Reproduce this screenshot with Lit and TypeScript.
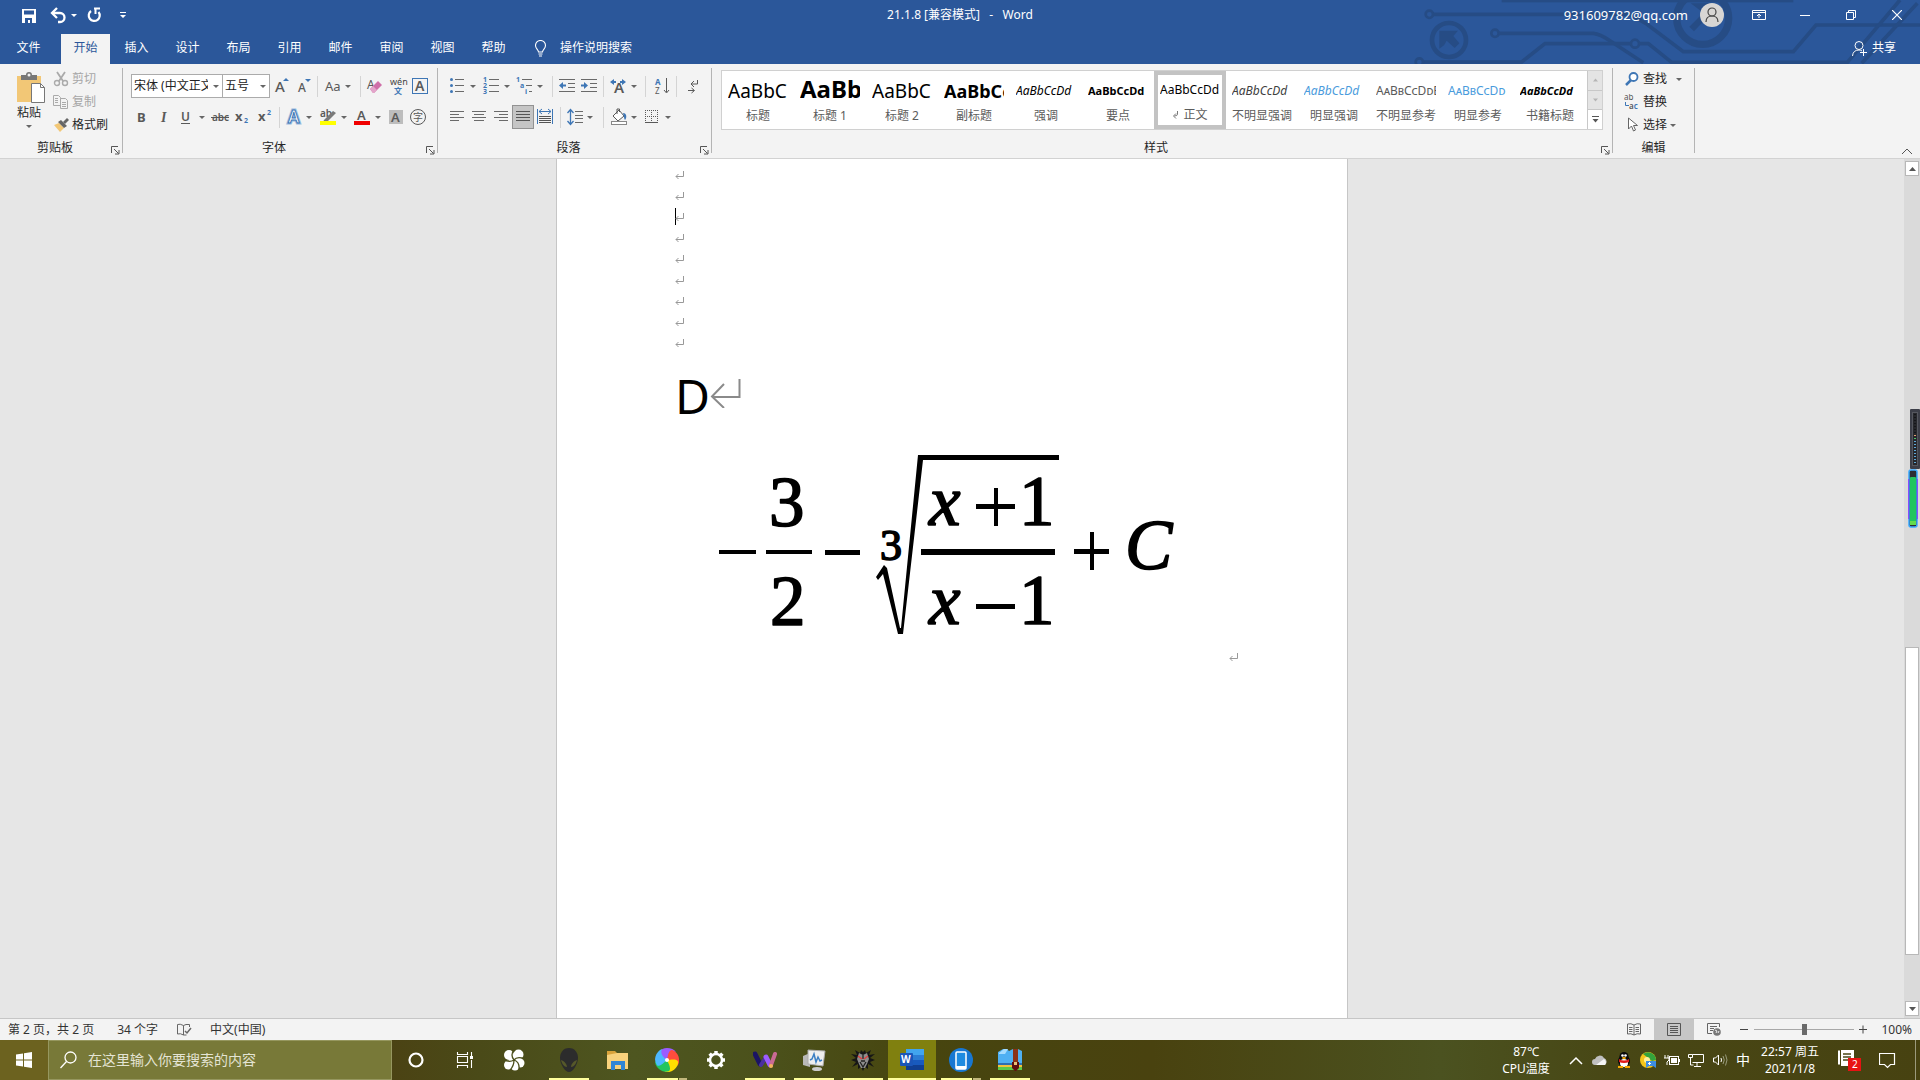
import { LitElement, html, svg, css, TemplateResult, SVGTemplateResult } from "lit";
import { customElement, state } from "lit/decorators.js";
import { classMap } from "lit/directives/class-map.js";

type Art = SVGTemplateResult | SVGTemplateResult[];

const icon = (w: number, h: number, art: Art, cls = "") =>
  html`<svg class=${cls} width=${w} height=${h} viewBox="0 0 ${w} ${h}" aria-hidden="true">${art}</svg>`;

/* Small drop-down triangle centred on x */
const caret = (x: number, y = 12) => svg`<path d="M${x - 3} ${y}h6l-3 3z" fill="#666"/>`;
const lines = (rows: number[][], color = "#6a6a6a") =>
  rows.map(([x, y, w]) => svg`<rect x=${x} y=${y} width=${w} height="1" fill=${color}/>`);

const G = "#595959";
const B = "#3e76b5";

interface Tool {
  label: string;
  w: number;
  art?: Art;
  on?: boolean;
}

const sep: Tool = { label: "", w: 6 };

const fontTop: Tool[] = [
  { label: "增大字号", w: 23, art: svg`<text x="6" y="18" font-size="15" font-weight="500" fill=${G}>A</text><path d="M14 7h6l-3-3z" fill=${B}/>` },
  { label: "减小字号", w: 23, art: svg`<text x="6" y="18" font-size="12" font-weight="500" fill=${G}>A</text><path d="M13 5h6l-3 3z" fill=${B}/>` },
  sep,
  { label: "更改大小写", w: 37, art: svg`<text x="4" y="17" font-size="13" fill=${G}>Aa</text>${caret(27, 11)}` },
  sep,
  { label: "清除所有格式", w: 23, art: svg`<text x="3" y="15" font-size="12" fill=${G}>A</text><path d="M6 15l8-8 4 4-8 8h-1z" fill="#cf6fa8"/><path d="M6 15l3-3 4 4-3 3h-1z" fill="#e3a5ca"/>` },
  { label: "拼音指南", w: 23, art: svg`<text x="3" y="11" font-size="9" fill="#444">wén</text><text x="7" y="20" font-size="8" font-weight="700" fill=${B}>文</text>` },
  { label: "字符边框", w: 23, art: svg`<rect x="2.500" y="4.500" width="15" height="15" fill="none" stroke=${B}/><text x="5" y="17" font-size="14" font-weight="600" fill=${G}>A</text>` },
];

const fontBottom: Tool[] = [
  { label: "加粗", w: 22, art: svg`<text x="6" y="17" font-size="13" font-weight="700" fill=${G}>B</text>` },
  { label: "倾斜", w: 22, art: svg`<text x="8" y="17" font-size="14" font-style="italic" font-weight="700" font-family="Liberation Serif" fill=${G}>I</text>` },
  { label: "下划线", w: 34, art: svg`<text x="6" y="16" font-size="12" font-weight="600" fill=${G}>U</text><rect x="6" y="18" width="9" height="1" fill=${G}/>${caret(27, 11)}` },
  { label: "删除线", w: 24, art: svg`<text x="3" y="16" font-size="10" font-weight="600" fill=${G}>abc</text><rect x="2" y="12" width="18" height="1" fill=${G}/>` },
  { label: "下标", w: 22, art: svg`<text x="2" y="16" font-size="13" font-weight="700" fill=${G}>x</text><text x="11" y="18" font-size="7" font-weight="700" fill=${B}>2</text>` },
  { label: "上标", w: 22, art: svg`<text x="3" y="16" font-size="13" font-weight="700" fill=${G}>x</text><text x="12" y="10" font-size="7" font-weight="700" fill=${B}>2</text>` },
  sep,
  { label: "文本效果", w: 32, art: svg`<text x="5" y="18" font-size="17" font-weight="600" fill="#fff" stroke="#9cbce0" stroke-width="3">A</text><text x="5" y="18" font-size="17" font-weight="600" fill="#fff" stroke=${B}>A</text>${caret(26, 11)}` },
  { label: "突出显示", w: 34, art: svg`<text x="5" y="12" font-size="10" font-weight="600" fill=${G}>ab</text><path d="M9 15l9-9 3 2-8 8-5 1z" fill="#7a7a7a"/><rect x="5" y="16" width="16" height="4" fill="#ff0"/>${caret(29, 11)}` },
  { label: "字体颜色", w: 35, art: svg`<text x="8" y="15" font-size="13" font-weight="600" fill=${G}>A</text><rect x="5" y="16" width="16" height="4" fill="#f00000"/>${caret(29, 11)}` },
  { label: "字符底纹", w: 22, art: svg`<rect x="5" y="5" width="14" height="14" fill="#bdbdbd"/><text x="7" y="17" font-size="13" font-weight="600" fill=${G}>A</text>` },
  { label: "带圈字符", w: 22, art: svg`<circle cx="12" cy="12" r="7.500" fill="none" stroke=${G}/><text x="7" y="16" font-size="10" fill=${G}>字</text>` },
];

const paraTop: Tool[] = [
  { label: "项目符号", w: 34, art: svg`${[6, 12, 18].map((y) => svg`<circle cx="4.500" cy=${y - 0.5} r="1.500" fill=${B}/>`)}${lines([[8, 5, 9], [8, 11, 9], [8, 17, 9]])}${caret(26, 11)}` },
  { label: "编号", w: 34, art: svg`${[1, 2, 3].map((n) => svg`<text x="2" y=${2 + n * 6} font-size="7" font-weight="700" fill=${B}>${n}</text>`)}${lines([[8, 5, 10], [8, 11, 10], [8, 17, 10]])}${caret(26, 11)}` },
  { label: "多级列表", w: 35, art: svg`<text x="1" y="8" font-size="7" font-weight="700" fill=${B}>1</text><text x="5" y="14" font-size="7" font-weight="700" fill=${B}>a</text><text x="10" y="20" font-size="7" font-weight="700" fill=${B}>i</text>${lines([[7, 5, 10], [11, 11, 6], [14, 17, 3]])}${caret(25, 11)}` },
  sep,
  { label: "减少缩进量", w: 22, art: svg`${lines([[3, 5, 16], [12, 9, 7], [12, 13, 7], [3, 17, 16]])}<path d="M3 11.500l4-3.500v2.500h3v2h-3v2.500z" fill=${B}/>` },
  { label: "增加缩进量", w: 23, art: svg`${lines([[3, 5, 16], [12, 9, 7], [12, 13, 7], [3, 17, 16]])}<path d="M10 11.500l-4-3.500v2.500h-3v2h3v2.500z" fill=${B}/>` },
  sep,
  { label: "中文版式", w: 36, art: svg`<text x="7" y="19" font-size="15" font-weight="600" fill=${G}>A</text><path d="M3 8l4-3v2h2v2h-2v2zM19 8l-4-3v2h-2v2h2v2z" fill=${B}/>${caret(27, 11)}` },
  sep,
  { label: "排序", w: 25, art: svg`<text x="6" y="11" font-size="8" font-weight="700" fill=${B}>A</text><text x="6" y="20" font-size="8" fill=${G}>Z</text><path d="M17.500 4v14M15 16l2.500 3 2.500-3" fill="none" stroke=${G}/>` },
  sep,
  { label: "显示编辑标记", w: 28, art: svg`<path d="M17.500 6v4h-6M14 7l-3 3 3 3M8 16.500h6M11.500 14l3 2.500-3 2.500" fill="none" stroke=${G}/>` },
];

const paraBottom: Tool[] = [
  { label: "左对齐", w: 22, art: svg`${lines([[3, 6, 14], [3, 9, 9], [3, 12, 14], [3, 15, 9]])}` },
  { label: "居中", w: 22, art: svg`${lines([[3, 6, 14], [5, 9, 10], [3, 12, 14], [5, 15, 10]])}` },
  { label: "右对齐", w: 21, art: svg`${lines([[3, 6, 14], [8, 9, 9], [3, 12, 14], [8, 15, 9]])}` },
  { label: "两端对齐", w: 22, on: true, art: svg`${lines([[4, 6, 14], [4, 9, 14], [4, 12, 14], [4, 15, 14]], "#555")}` },
  { label: "分散对齐", w: 24, art: svg`<path d="M3.500 4v15M18.500 4v15" stroke=${B}/><path d="M5 6.500h12M8 4l-3 2.500 3 2.500M14 4l3 2.500-3 2.500" fill="none" stroke=${B}/>${lines([[5, 11, 12], [5, 13, 12], [5, 15, 12], [5, 17, 12]], "#555")}` },
  sep,
  { label: "行和段落间距", w: 37, art: svg`<path d="M6.500 5v14M3.500 8l3-3.500 3 3.500M3.500 16l3 3.500 3-3.500" fill="none" stroke=${B} stroke-width="1.300"/>${lines([[11, 6, 8], [11, 10, 8], [11, 13, 8], [11, 17, 8]])}${caret(26, 11)}` },
  sep,
  { label: "底纹", w: 36, art: svg`<path d="M6 11l6-6 5 6-6 5z" fill="#fff" stroke=${G}/><path d="M10 9V4h2.500v3" fill="none" stroke=${G}/><path d="M16 8c4 0 4 5 2 7-1-1-1-4-2-7z" fill=${B}/><rect x="4.500" y="16.500" width="15" height="3" fill="#fff" stroke="#888"/>${caret(27, 11)}` },
  { label: "边框", w: 34, art: svg`<path d="M2 5.500h13M2 11.500h13M2.500 5v12M8.500 5v12M14.500 5v12" stroke=${G} stroke-dasharray="1 1"/><rect x="2" y="17" width="13" height="1" fill=${G}/>${caret(25, 11)}` },
];

const styleItems = [
  ["AaBbC", "标题", "p-title"],
  ["AaBb", "标题 1", "p-head"],
  ["AaBbC", "标题 2", "p-title"],
  ["AaBbCc", "副标题", "p-sub"],
  ["AaBbCcDd", "强调", "p-em"],
  ["AaBbCcDd", "要点", "p-strong"],
  ["AaBbCcDd", "正文", ""],
  ["AaBbCcDd", "不明显强调", "p-em p-gray"],
  ["AaBbCcDd", "明显强调", "p-em p-blue"],
  ["AaBbCcDdEe", "不明显参考", "p-caps p-mute"],
  ["AaBbCcDd", "明显参考", "p-caps p-blue"],
  ["AaBbCcDd", "书籍标题", "p-em p-strong"],
];

const launcher = icon(10, 10, svg`<path d="M1.500 8V1.500H8M4 4l4.500 4.500M9 5v4H5" fill="none" stroke="#555"/>`);
const returnMark = icon(9, 9, svg`<path d="M8.500 1v5.500H1M3.500 4L1 6.500 3.500 9" fill="none" stroke="#999"/>`, "mark");

const circuit = svg`
  <g transform="scale(.33333)" fill="none" stroke="#264c85" stroke-width="11">
    <rect x="305" y="0" width="875" height="7" fill="#264c85" stroke="none"/>
    <circle cx="88" cy="43" r="11" stroke-width="8"/>
    <path d="M100 43H690L740 72L850 155H1180L1248 75H1560"/>
    <circle cx="147" cy="120" r="51" stroke-width="14"/>
    <path d="M118 92h56l-14 16 18 22-14 14-24-22-8 14-14 10z" fill="#264c85" stroke="none"/>
    <circle cx="285" cy="100" r="11" stroke-width="8"/>
    <path d="M297 100H580Q600 102 630 122L730 188"/>
    <circle cx="705" cy="131" r="12" stroke-width="8"/>
    <path d="M693 131H435L365 186H70M717 131H745L815 187H1342L1500 0M1385 190L1552 10"/>
    <circle cx="58" cy="186" r="11" stroke-width="8"/>
    <circle cx="908" cy="55" r="78" stroke-width="22"/>
    <path d="M872 10h68v60l-18-18-40 42-14-14 42-42z" fill="#264c85" stroke="none"/>
  </g>`;

const formula = svg`
  <g font-family="Liberation Serif" font-size="71" fill="#000" stroke-linejoin="round">
    <path d="M44 118h37v4H44zM91 118h46v4H91zM150 118h35v5h-35zM246 117h134v6H246z"/>
    <path d="M201 145l8-12 3 3 13 60h1L243 23h141v5H248L228 202h-5L208 142l-5 6z"/>
    <path d="M301 72h39v5h-39zM319 56h4v38h-4zM301 172h39v5h-39zM399 117h35v5h-35zM415 100h4v38h-4z"/>
    <g stroke="#000" stroke-width="1.600">
      <text x="94" y="94">3</text>
      <text x="95" y="193">2</text>
      <text x="205" y="128" font-size="44">3</text>
      <text x="254" y="93" font-style="italic">x</text>
      <text x="254" y="192" font-style="italic">x</text>
      <text x="344" y="93">1</text>
      <text x="344" y="192">1</text>
      <text x="450" y="137" font-style="italic">C</text>
    </g>
  </g>`;

interface App {
  name: string;
  art: Art;
  run?: "full" | "multi";
  active?: boolean;
}

const apps: App[] = [
  { name: "Alienware", run: "full", art: svg`<path d="M12 0c6 0 9 5 9 10 0 6-5 14-9 14S3 16 3 10c0-5 3-10 9-10z" fill="#2c2c2c"/><path d="M4 12c3 1 6 4 6 7-3 0-5-3-6-7zM20 12c-3 1-6 4-6 7 3 0 5-3 6-7z" fill="#56582a"/>` },
  { name: "文件资源管理器", art: svg`<path d="M1 3h8l2 2h11v16H1z" fill="#d9a33a"/><path d="M1 7l10-2h11v16H1z" fill="#f8d27c"/><path d="M5 13h14v9h-4v-4H9v4H5z" fill="#2f86d6"/><rect x="9" y="17" width="6" height="4" fill="#f8d27c"/>` },
  { name: "浏览器", run: "multi", art: svg`${["#9b5cff", "#ff4d3d", "#ffdf00", "#22c55e", "#4db8ff"].map((c, i) => svg`<path d="M12 12C9 10 3 8 4 4Q7 0 12 0q6 0 9 4c-4-1-7 2-9 8z" fill=${c} transform="rotate(${i * 72} 12 12)"/>`)}<circle cx="12" cy="12" r="2" fill="#fff"/>` },
  { name: "设置", art: svg`<circle cx="12" cy="12" r="6" fill="none" stroke="#fff" stroke-width="2.500"/>${[0, 45, 90, 135].map((a) => svg`<path d="M12 3v3M12 18v3" stroke="#fff" stroke-width="3.500" transform="rotate(${a} 12 12)"/>`)}` },
  { name: "万兴", run: "full", art: svg`<path d="M2 6l5 10" stroke="#1b1464" stroke-width="5" stroke-linecap="round"/><path d="M8 17l5-8" stroke="#4a2fa0" stroke-width="4" stroke-linecap="round"/><path d="M13 9l4 8" stroke="#9c5cff" stroke-width="5" stroke-linecap="round"/><path d="M18 17l4-11" stroke="#c96a94" stroke-width="4" stroke-linecap="round"/><circle cx="18" cy="18" r="2" fill="#f2b35c"/>` },
  { name: "性能监视器", run: "full", art: svg`<path d="M1 8l7-3v14l-7-2z" fill="#b9b9b9"/><path d="M6 2l17 1-2 15-15-2z" fill="#eee" stroke="#aaa"/><path d="M8 12l2-1 2-5 2 8 2-5 2 4 2-1" fill="none" stroke="#3b7fc4" stroke-width="1.500"/><ellipse cx="15" cy="21" rx="5" ry="2" fill="#ccc"/>` },
  { name: "巫师", run: "full", art: svg`<path d="M12 4l2-2 1 3 5-3-2 5 6-1-5 4 5 2-5 2 4 5-6-3 0 5-3-2-2 4-2-4-3 2 0-5-6 3 4-5-5-2 5-2-5-4 6 1-2-5 5 3 1-3z" fill="#161616"/><path d="M8 5l4 2 4-2 2 6-2 5-2 4h-4l-2-4-2-5z" fill="#8d8d8d"/><path d="M12 7v4M9 14l3 5 3-5M10 13h4" stroke="#222" stroke-width="1.300" fill="none"/><path d="M7 8l4 3M17 8l-4 3" stroke="#e04040" stroke-width="1.500"/>` },
  { name: "Word", run: "full", active: true, art: svg`<rect x="6" y="1" width="18" height="6" fill="#41a5ee"/><rect x="6" y="7" width="18" height="5" fill="#2b7cd3"/><rect x="6" y="12" width="18" height="5" fill="#185abd"/><rect x="6" y="17" width="18" height="5" fill="#103f91"/><rect x="0" y="5" width="13" height="13" rx="1" fill="#1a56b8"/><text x="1" y="15" font-size="10" font-weight="700" fill="#fff">W</text>` },
  { name: "手机助手", run: "multi", art: svg`<circle cx="12" cy="12" r="12" fill="#1877d2"/><rect x="7" y="4" width="10" height="17" rx="1" fill="#1f8be0" stroke="#fff" stroke-width="1.500"/><rect x="7" y="18" width="10" height="3" fill="#fff"/>` },
  { name: "压缩软件", run: "full", art: svg`<path d="M0 4l5-3h4l2 2 4-2h5l4 2v12H0z" fill="#4fb0f3"/><path d="M1 5l5-4h4l-3 5H1z" fill="#a5dcff"/><rect x="0" y="15" width="24" height="2" fill="#2f6fb0"/><rect x="0" y="17" width="24" height="2" fill="#f2c33c"/><rect x="0" y="19" width="24" height="3" fill="#5cc84a"/><rect x="15" y="1" width="5" height="20" fill="#8b3218"/><path d="M14 14h7v6l-3 3h-1l-3-3z" fill="#5e0d10"/><rect x="16" y="14" width="3" height="3" fill="#e8c078"/>` },
];

const tray: [string, Art][] = [
  ["显示隐藏的图标", svg`<path d="M2 12l6-6 6 6" fill="none" stroke="#fff" stroke-width="1.500"/>`],
  ["OneDrive", svg`<path d="M3 13a3 3 0 0 1 0-6 5 5 0 0 1 9-1 4 4 0 0 1 1 7z" fill="#bfbfbf"/><path d="M4 13l8-6a4 4 0 0 1 1 6z" fill="#f5f5f5"/>`],
  ["QQ", svg`<ellipse cx="8" cy="9" rx="6" ry="6" fill="#0a0a0a"/><ellipse cx="8" cy="4.500" rx="4.500" ry="4.500" fill="#0a0a0a"/><ellipse cx="8" cy="11" rx="4" ry="4" fill="#fff"/><path d="M3 7q5 3 10 0v3q-5 2-10 0z" fill="#e01b1b"/><circle cx="6.500" cy="3.500" r="1.300" fill="#fff"/><circle cx="9.500" cy="3.500" r="1.300" fill="#fff"/><ellipse cx="8" cy="6" rx="2" ry="1" fill="#f8a800"/><path d="M2 14h5v2H2zM9 14h5v2H9z" fill="#f8a800"/>`],
  ["游戏加速", svg`<circle cx="8" cy="8" r="8" fill="#f5c518"/><path d="M3 2a8 8 0 0 1 13 6l-4 1-5-4z" fill="#34a33c"/><circle cx="7" cy="8" r="3" fill="#fff09a"/><path d="M6 9h10v7l-3-2H9l-3 2z" fill="#3d8de0"/><path d="M8 11.500h3M9.500 10v3" stroke="#fff"/>`],
  ["电源", svg`<path d="M1 3v3M4 3v3M0 6h5v2l-2 2v3" fill="none" stroke="#fff"/><rect x="5.500" y="4.500" width="9" height="8" fill="none" stroke="#fff"/><rect x="7" y="6" width="6" height="5" fill="#fff"/><rect x="15" y="7" width="1" height="3" fill="#fff"/>`],
  ["网络", svg`<path d="M4.500 2.500h11v8h-11M9 11v3M6 14.500h7" fill="none" stroke="#fff"/><path d="M.5 2.500h4v3h-4zM2.500 6v7h3" fill="none" stroke="#fff"/>`],
  ["音量", svg`<path d="M1.500 6h2l3-3v10l-3-3h-2z" fill="none" stroke="#fff"/><path d="M9 6q1 2 0 4" fill="none" stroke="#fff"/><path d="M11 4q2.500 4 0 8M13.500 2.500q3 5.500 0 11" fill="none" stroke="#999b7c"/>`],
];

@customElement("app-root")
export class AppRoot extends LitElement {
  @state() private tab = "开始";
  @state() private current = "正文";

  static styles = css`
    :host {
      display: flex;
      flex-direction: column;
      min-height: 100vh;
      position: relative;
      overflow: hidden;
      font: 12px/16px "Noto Sans", "Noto Sans CJK SC", sans-serif;
      color: #262626;
      background: #e6e6e6;
    }
    * { box-sizing: border-box; }
    svg { display: block; flex: none; }
    button { font: inherit; color: inherit; background: none; border: 0; padding: 0; margin: 0; }

    .head { position: relative; background: #2b579a; color: #fff; }
    .circuit { position: absolute; top: 0; right: 0; }
    .titlebar { position: relative; display: grid; grid-template-columns: 1fr auto 1fr; height: 34px; padding-bottom: 4px; align-items: center; }
    .quick { display: flex; align-items: center; padding-left: 21px; }
    .account { display: flex; align-items: center; justify-content: flex-end; height: 30px; }
    .mail { font-size: 13px; padding-right: 12px; }
    .win { display: grid; place-items: center; width: 46px; height: 30px; }
    .avatar { padding-right: 12px; }
    .doc-name { white-space: pre; }
    .tabs { position: relative; display: flex; height: 30px; padding-left: 5px; }
    .tab { width: 51px; padding-bottom: 3px; }
    .tab.file { width: 47px; margin-right: 9px; }
    .tab.on { background: #f3f3f3; color: #2b579a; width: 49px; margin-right: 1px; }
    .tell { display: flex; align-items: center; gap: 13px; margin-left: 16px; padding-bottom: 2px; }
    .share { display: flex; align-items: center; gap: 5px; margin-left: auto; padding: 0 24px 2px 0; }

    .ribbon { display: flex; height: 95px; background: #f3f3f3; border-bottom: 1px solid #d2d2d2; }
    .rule { width: 1px; background: #b4b4b4; margin: 4px 0 5px; }
    .group { display: flex; flex-direction: column; justify-content: space-between; padding-top: 10px; }
    .caption { display: flex; align-items: center; height: 20px; }
    .caption span { flex: 1; text-align: center; }
    .caption button { width: 12px; padding-top: 4px; }
    .rows { display: flex; flex-direction: column; gap: 7px; }
    .row { display: flex; height: 24px; }
    .tool.on { background: #c5c5c5; outline: 1px solid #929292; outline-offset: -1px; }
    .bar { width: 1px; height: 21px; margin: 2px 3px 2px 2px; background: #d4d4d4; }
    .clip { width: 122px; }
    .clip-body { display: flex; padding-left: 13px; }
    .paste { display: flex; flex-direction: column; align-items: center; width: 32px; margin-right: 8px; margin-top: -3px; }
    .stack { display: flex; flex-direction: column; gap: 7px; margin-top: -3px; }
    .mini { display: flex; align-items: center; gap: 3px; height: 16px; }
    .mini:disabled { color: #a6a6a6; }
    .font { width: 314px; }
    .font .rows { padding-left: 8px; }
    .combo { position: relative; height: 24px; margin-right: -1px; }
    .combo svg { position: absolute; right: 3px; top: 0; pointer-events: none; }
    .combo select { appearance: none; font: inherit; color: #222; height: 24px; width: 48px; padding: 0 14px 0 2px; margin: 0; background: #fff; border: 1px solid #ababab; border-radius: 0; overflow: hidden; text-overflow: clip; }
    .combo.wide select { width: 92px; }
    .para { width: 273px; }
    .para .rows { padding-left: 9px; }
    .styles { flex: 0 1 900px; min-width: 0; padding-top: 6px; }
    .gallery { display: flex; height: 60px; margin: 0 9px; border: 1px solid #d0d0d0; background: #fff; }
    .cards { display: flex; flex: 1; min-width: 0; overflow: hidden; }
    .card { flex: none; width: 72px; height: 58px; padding: 0 6px 1px; border: 0 solid #c3c3c3; color: #5c5c5c; }
    .card.on { border-width: 4px; padding: 0 2px 1px; }
    .card.on .preview { margin-top: -4px; }
    .preview { display: block; height: 32px; line-height: 38px; overflow: hidden; white-space: nowrap; text-align: left; color: #000; }
    .name { display: flex; justify-content: center; align-items: center; gap: 4px; height: 24px; margin: 0 -6px; white-space: nowrap; }
    .p-title { font-size: 19px; }
    .p-head { font-size: 24px; font-weight: 700; line-height: 34px; }
    .p-sub { font-size: 18px; font-weight: 700; }
    .p-em { font-style: italic; }
    .p-strong { font-size: 11px; font-weight: 700; }
    .p-gray { color: #404040; }
    .p-mute { color: #5a5a5a; }
    .p-blue { color: #4a9bdc; }
    .p-caps { font-variant: small-caps; }
    .scroller { display: flex; flex-direction: column; width: 15px; border-left: 1px solid #c8c8c8; }
    .scroller button { flex: 1; display: grid; place-items: center; background: #e4e4e4; border-bottom: 1px solid #c8c8c8; }
    .scroller button:last-child { background: #fff; border: 0; }
    .edit { width: 81px; }
    .edit .stack { padding-left: 11px; }
    .collapse { margin: auto 7px 0 auto; height: 12px; }

    .work { flex: 1; display: flex; min-height: 400px; }
    .canvas { flex: 1; display: flex; justify-content: center; }
    .page { width: 792px; background: #fff; border: solid #c6c6c6; border-width: 0 1px; padding: 5px 110px 0 118px; }
    .para-line { display: flex; align-items: center; height: 21px; margin: 0; }
    .ibeam { width: 1px; height: 17px; background: #000; margin-right: -1px; }
    .answer { font-size: 48px; line-height: 72px; margin: 7px 0 0; color: #000; display: flex; align-items: baseline; }
    .answer svg { align-self: flex-start; margin-top: 18px; }
    .figure { display: flex; align-items: flex-end; margin: 0; }
    .vscroll { display: flex; flex-direction: column; width: 16px; background: #dadada; padding: 2px 1px; }
    .vscroll button { display: grid; place-items: center; height: 15px; background: #fff; border: 1px solid #b8b8b8; }
    .thumb { height: 308px; background: #fff; border: 1px solid #b8b8b8; margin: auto 0 46px; }
    .gadget { position: absolute; right: 0; top: 409px; }

    .status { display: flex; align-items: center; height: 22px; background: #f3f3f3; border-top: 1px solid #c6c6c6; padding-left: 8px; color: #333; }
    .status span { margin-right: 18px; white-space: nowrap; }
    .status .pages { margin-right: 23px; }
    .status .lang { margin-left: 18px; }
    .views { display: flex; margin-left: auto; }
    .view { display: grid; place-items: center; width: 40px; height: 21px; }
    .view.on { background: #c6c6c6; }
    .zoom { display: flex; align-items: center; gap: 5px; margin-left: 6px; }
    .zoom button { display: grid; place-items: center; width: 9px; height: 20px; }
    .zoom input { appearance: none; width: 100px; height: 20px; margin: 0; background: linear-gradient(#a8a8a8, #a8a8a8) center / 100% 1px no-repeat; }
    .zoom input::-webkit-slider-thumb { appearance: none; width: 5px; height: 11px; background: #6a6a6a; border-radius: 0; }
    .status .pct { margin: 0 8px 0 13px; }

    .taskbar { display: flex; height: 40px; color: #fff; background: linear-gradient(90deg, #4b4213 20%, #4a4a18 25%, #4e5620 33%, #4b511b 40%, #47450f 48%, #49420f 60%, #4b5220 75%, #484715 84%, #474211); }
    .start { display: grid; place-items: center; width: 48px; background: #6c621f; }
    .search { display: flex; align-items: center; gap: 11px; width: 344px; padding-left: 11px; background: #787938; border: 1px solid #96975f; }
    .search input { flex: 1; min-width: 0; background: none; border: 0; outline: 0; padding: 0; font: inherit; font-size: 14px; color: #fff; }
    .search input::placeholder { color: #e4e4d4; opacity: 1; }
    .pins { display: flex; gap: 1px; }
    .apps { display: flex; gap: 1px; margin-left: 7px; }
    .app { display: flex; flex-direction: column; align-items: center; justify-content: space-between; width: 48px; padding-top: 8px; }
    .pins .app { padding-top: 0; justify-content: center; }
    .app.active { background: #80800f; }
    .run { display: flex; gap: 1px; width: 40px; height: 2px; }
    .active .run { width: 48px; }
    .run i { flex: 1; background: #ffff9c; }
    .run i + i { flex: 0 0 8px; background: #c2b87c; }
    .stretch { flex: 1; }
    .two { text-align: center; line-height: 17px; padding-top: 3px; }
    .temp { width: 62px; }
    .tray { display: flex; align-items: center; gap: 8px; margin-left: 11px; }
    .ime { font-size: 14px; width: 14px; }
    .clock { width: 80px; }
    .news, .notes { display: grid; place-items: center; }
    .news { width: 24px; margin-left: 8px; }
    .notes { width: 28px; margin: 0 14px 0 11px; }
    .peek { width: 5px; border-left: 1px solid #9b9a7c; }
  `;

  private tool(t: Tool): TemplateResult {
    return t.art
      ? html`<button class=${classMap({ tool: true, on: !!t.on })} aria-label=${t.label}>${icon(t.w, 24, t.art)}</button>`
      : html`<i class="bar"></i>`;
  }

  private caption(text: string, launch = true) {
    return html`<div class="caption"><span>${text}</span>${launch ? html`<button aria-label="${text}设置">${launcher}</button>` : ""}</div>`;
  }

  private renderHead() {
    const tabs = ["文件", "开始", "插入", "设计", "布局", "引用", "邮件", "审阅", "视图", "帮助"];
    return html`<header class="head">
      ${icon(520, 64, circuit, "circuit")}
      <div class="titlebar">
        <div class="quick">
          <button aria-label="保存">${icon(28, 18, svg`<path d="M1 3h14v14H1z" fill="#fff"/><path d="M3 4.500h10v4H3zM4 12h7v5H9v-3H7v3H4z" fill="#2b579a"/>`)}</button>
          <button aria-label="撤消">${icon(38, 18, svg`<path d="M4 7h7a4.500 4.500 0 0 1 0 9H9" fill="none" stroke="#fff" stroke-width="2.300"/><path d="M8 2L3 7l5 5" fill="none" stroke="#fff" stroke-width="2.300"/><path d="M22 8h6l-3 3z" fill="#fff"/>`)}</button>
          <button aria-label="恢复">${icon(28, 18, svg`<path d="M4 5a5.500 5.500 0 1 0 7.500 1" fill="none" stroke="#fff" stroke-width="2.200"/><path d="M7 2.500h6M8.500 2v6" fill="none" stroke="#fff" stroke-width="2"/>`)}</button>
          <button aria-label="自定义快速访问工具栏">${icon(16, 18, svg`<path d="M5 6h6v1H5zM5 9h6l-3 3z" fill="#fff"/>`)}</button>
        </div>
        <div class="doc-name">21.1.8 [兼容模式]   -   Word</div>
        <div class="account">
          <span class="mail">931609782@qq.com</span>
          <span class="avatar">${icon(24, 24, svg`<circle cx="12" cy="12" r="12" fill="#d8d6d4"/><circle cx="12" cy="9" r="4" fill="none" stroke="#444" stroke-width="1.200"/><path d="M6 19q0-6 6-6t6 6" fill="none" stroke="#444" stroke-width="1.200"/>`)}</span>
          <button class="win" aria-label="功能区显示选项">${icon(14, 12, svg`<path d="M.5 1.500h13v9H.5zM.5 3.500h13M7 9V5.500M5 7l2-2 2 2" fill="none" stroke="#fff"/>`)}</button>
          <button class="win" aria-label="最小化">${icon(10, 10, svg`<rect y="5" width="10" height="1" fill="#fff"/>`)}</button>
          <button class="win" aria-label="还原">${icon(10, 10, svg`<path d="M.5 2.500h7v7h-7zM2.500 2.500v-2h7v7h-2" fill="none" stroke="#fff"/>`)}</button>
          <button class="win" aria-label="关闭">${icon(10, 10, svg`<path d="M0 0l10 10M10 0L0 10" stroke="#fff" stroke-width="1.200"/>`)}</button>
        </div>
      </div>
      <nav class="tabs">
        ${tabs.map((t, i) => html`<button class=${classMap({ tab: true, file: i === 0, on: t === this.tab })} @click=${() => (this.tab = t)}>${t}</button>`)}
        <button class="tell">${icon(12, 17, svg`<path d="M3.500 12c0-2-3-3.500-3-6.500a5 5 0 0 1 10 0c0 3-3 4.500-3 6.500zM3.500 14h4M4 16h3" fill="none" stroke="#fff" stroke-width="1.100"/>`)}操作说明搜索</button>
        <button class="share">${icon(15, 17, svg`<circle cx="7" cy="5.500" r="4" fill="none" stroke="#fff"/><path d="M.5 16q.5-6 6.500-6 2 0 3 1M11.500 9v7M8 12.500h7" fill="none" stroke="#fff"/>`)}共享</button>
      </nav>
    </header>`;
  }

  private renderRibbon() {
    return html`<section class="ribbon">
      <div class="group clip">
        <div class="clip-body">
          <button class="paste">
            ${icon(32, 34, svg`<path d="M4 5h24v26H4z" fill="#f2c776"/><path d="M8 4h5q0-3 3-3t3 3h5v5H8z" fill="#777"/><circle cx="16" cy="4" r="1.500" fill="#f3f3f3"/><path d="M18.500 12.500h9l4 4v15h-13z" fill="#fff" stroke="#777"/><path d="M27.500 12.500v4h4" fill="none" stroke="#777"/>`)}
            粘贴${icon(8, 10, svg`<path d="M1 4h6l-3 3z" fill="#666"/>`)}
          </button>
          <div class="stack">
            <button class="mini" disabled>${icon(16, 16, svg`<path d="M4 1l6 9M12 1l-6 9" stroke="#aaa" stroke-width="1.800"/><circle cx="4" cy="12" r="2.500" fill="none" stroke="#aaa" stroke-width="1.400"/><circle cx="12" cy="12" r="2.500" fill="none" stroke="#aaa" stroke-width="1.400"/>`)}剪切</button>
            <button class="mini" disabled>${icon(16, 16, svg`<path d="M.5 1.500h5l2 2v8h-7zM2 4.500h3M2 6.500h3M2 8.500h3" fill="none" stroke="#aaa"/><path d="M7.500 4.500h5l2 2v8h-7z" fill="#f3f3f3" stroke="#aaa"/><path d="M9 8.500h4M9 10.500h4M9 12.500h4" stroke="#aaa"/>`)}复制</button>
            <button class="mini">${icon(16, 16, svg`<path d="M1 8l5-2 5 5-4 4z" fill="#f2c776"/><path d="M5 5l3-2 6 6-3 2z" fill="#666"/><path d="M10 5l4-4 2 2-4 4z" fill="#666"/>`)}格式刷</button>
          </div>
        </div>
        ${this.caption("剪贴板")}
      </div>
      <i class="rule"></i>
      <div class="group font">
        <div class="rows">
          <div class="row">
            <div class="combo wide"><select aria-label="字体"><option>宋体 (中文正文)</option></select>${icon(8, 24, caret(4, 11))}</div>
            <div class="combo"><select aria-label="字号"><option>五号</option></select>${icon(8, 24, caret(4, 11))}</div>
            ${fontTop.map((t) => this.tool(t))}
          </div>
          <div class="row">${fontBottom.map((t) => this.tool(t))}</div>
        </div>
        ${this.caption("字体")}
      </div>
      <i class="rule"></i>
      <div class="group para">
        <div class="rows">
          <div class="row">${paraTop.map((t) => this.tool(t))}</div>
          <div class="row">${paraBottom.map((t) => this.tool(t))}</div>
        </div>
        ${this.caption("段落")}
      </div>
      <i class="rule"></i>
      <div class="group styles">
        <div class="gallery">
          <div class="cards">
            ${styleItems.map(([sample, name, cls]) => html`<button class=${classMap({ card: true, on: name === this.current })} @click=${() => (this.current = name)}>
              <span class="preview ${cls}">${sample}</span>
              <span class="name">${name === "正文" ? icon(7, 8, svg`<path d="M5.500 0v3q0 2-3 2M4 2.500L1.500 5 4 7.500" fill="none" stroke="#777"/>`) : ""}${name}</span>
            </button>`)}
          </div>
          <div class="scroller">
            <button aria-label="上一行">${icon(7, 4, svg`<path d="M1 3.500h5l-2.500-3z" fill="#b5b5b5"/>`)}</button>
            <button aria-label="下一行">${icon(7, 4, svg`<path d="M1 .5h5l-2.500 3z" fill="#b5b5b5"/>`)}</button>
            <button aria-label="其他">${icon(7, 7, svg`<path d="M0 0h7v1H0zM.5 3h6l-3 3.500z" fill="#555"/>`)}</button>
          </div>
        </div>
        ${this.caption("样式")}
      </div>
      <i class="rule"></i>
      <div class="group edit">
        <div class="stack">
          <button class="mini">${icon(16, 16, svg`<circle cx="9.500" cy="6" r="4" fill="#fff" stroke=${B} stroke-width="1.800"/><path d="M7 9l-5 5" stroke=${B} stroke-width="2.500"/>`)}查找${icon(18, 16, caret(9, 7))}</button>
          <button class="mini">${icon(16, 16, svg`<text x="0" y="6" font-size="8" fill="#555">ab</text><text x="5" y="15" font-size="8" font-weight="600" fill="#555">a<tspan fill=${B}>c</tspan></text><path d="M1.500 8v3.500H5" fill="none" stroke=${B}/>`)}替换</button>
          <button class="mini">${icon(16, 16, svg`<path d="M4.500 1v11l3-3 2 5 2-1-2-4.500h4z" fill="#fff" stroke="#666"/>`)}选择${icon(8, 16, caret(3, 7))}</button>
        </div>
        ${this.caption("编辑", false)}
      </div>
      <i class="rule"></i>
      <button class="collapse" aria-label="折叠功能区">${icon(12, 8, svg`<path d="M1 6l5-5 5 5" fill="none" stroke="#555"/>`)}</button>
    </section>`;
  }

  private renderWork() {
    return html`<main class="work">
      <div class="canvas">
        <article class="page">
          ${Array.from({ length: 9 }, (_, i) => html`<p class="para-line">${i === 2 ? html`<i class="ibeam"></i>` : ""}${returnMark}</p>`)}
          <p class="answer">D${icon(31, 30, svg`<path d="M29.500 1v18H2M14 6L2 18.500 14 30" fill="none" stroke="#8a8a8a" stroke-width="2"/>`)}</p>
          <p class="figure">${icon(554, 229, formula)}${returnMark}</p>
        </article>
      </div>
      <div class="vscroll">
        <button aria-label="向上滚动">${icon(7, 4, svg`<path d="M0 4h7L3.500 0z" fill="#555"/>`)}</button>
        <div class="thumb"></div>
        <button aria-label="向下滚动">${icon(7, 4, svg`<path d="M0 0h7L3.500 4z" fill="#555"/>`)}</button>
      </div>
    </main>
    ${icon(12, 122, svg`
      <rect x="2" y="0" width="10" height="60" rx="1" fill="#3c3e48"/><rect x="4.500" y="3.500" width="5" height="53" fill="#26272c" stroke="#55575f"/>
      ${Array.from({ length: 17 }, (_, i) => svg`<rect x="6" y=${5 + i * 3} width="2" height="1" fill=${i < 7 ? "#15161a" : i === 7 ? "#e0a070" : i === 8 ? "#4fc26a" : "#5fa8d8"}/>`)}
      <rect x="1" y="61" width="8" height="57" rx="2" fill="#2b2c33" stroke="#39a9ff" stroke-width="1.500"/><rect x="0" y="70" width="1" height="40" fill="#8a4cff"/><rect x="9" y="70" width="1" height="40" fill="#8a4cff"/>
      <rect x="2" y="68" width="6" height="48" rx="1" fill="#22c55e"/><rect x="2" y="112" width="6" height="4" fill="#63dc4b"/>`, "gadget")}`;
  }

  private renderStatus() {
    return html`<footer class="status">
      <span class="pages">第 2 页，共 2 页</span><span>34 个字</span>
      ${icon(16, 14, svg`<path d="M7.500 2.500Q4 .5 1.500 1.500v9.500q3-1 6 1V2.500q2-1.500 6-1V4M7.500 12h3" fill="none" stroke="#666"/><path d="M9 8l2 2 4-5" fill="none" stroke="#666" stroke-width="1.500"/>`)}
      <span class="lang">中文(中国)</span>
      <div class="views">
        <button class="view" aria-label="阅读视图">${icon(14, 13, svg`<path d="M7 2Q4 0 .5 1v10q3.500-1 6.500 1 3-2 6.500-1V1Q10 0 7 2zv10M2 4.500h3.500M2 6.500h3.500M2 8.500h3.500M8.500 4.500H12M8.500 6.500H12M8.500 8.500H12" fill="none" stroke="#666"/>`)}</button>
        <button class="view on" aria-label="页面视图">${icon(14, 13, svg`<path d="M.5.5h13v12H.5zM3 3.500h8M3 5.500h8M3 7.500h8M3 9.500h8" fill="none" stroke="#555"/>`)}</button>
        <button class="view" aria-label="Web 版式视图">${icon(14, 13, svg`<path d="M12.500 4V.5H.5v10H5M3 3.500h7M3 5.500h4M3 7.500h3" fill="none" stroke="#666"/><circle cx="10" cy="9" r="3.800" fill="#777"/><path d="M8 7l2 1-1 2M11 10l1-2" stroke="#eee" fill="none"/>`)}</button>
      </div>
      <div class="zoom">
        <button aria-label="缩小">${icon(9, 9, svg`<rect y="4" width="8" height="1" fill="#444"/>`)}</button>
        <input type="range" min="0" max="100" value="50" aria-label="缩放" />
        <button aria-label="放大">${icon(9, 9, svg`<path d="M0 4.500h8M4 .5v8" stroke="#444"/>`)}</button>
      </div>
      <span class="pct">100%</span>
    </footer>`;
  }

  private renderTaskbar() {
    return html`<footer class="taskbar">
      <button class="start" aria-label="开始菜单">${icon(16, 16, svg`<path d="M0 2.500l7-1v6H0zM8 1.300L16 0v7.500H8zM0 8.500h7v6l-7-1zM8 8.500h8V16l-8-1.300z" fill="#fff"/>`)}</button>
      <label class="search">${icon(17, 18, svg`<circle cx="10.500" cy="6.500" r="5.500" fill="none" stroke="#fff" stroke-width="1.300"/><path d="M6.500 10.500L.5 17" stroke="#fff" stroke-width="1.300"/>`)}<input type="text" placeholder="在这里输入你要搜索的内容" aria-label="搜索" /></label>
      <div class="pins">
        <button class="app" aria-label="Cortana">${icon(20, 20, svg`<circle cx="10" cy="10" r="6.500" fill="none" stroke="#fff" stroke-width="2.200"/>`)}</button>
        <button class="app" aria-label="任务视图">${icon(18, 18, svg`<path d="M1.500 1v2.500h10V1M1.500 17v-2.500h10V17M1.500 5.500h10v6h-10zM15.500 1v4M15.500 9v8" fill="none" stroke="#fff" stroke-width="1.100"/><rect x="14" y="5" width="3" height="3" fill="#fff"/>`)}</button>
        <button class="app" aria-label="收藏">${icon(22, 22, svg`<circle cx="6" cy="6" r="5" fill="#fff"/><circle cx="15.500" cy="5.500" r="5" fill="#fff"/><circle cx="17" cy="14" r="4.500" fill="#fff"/><circle cx="12" cy="17.500" r="4" fill="#fff"/><circle cx="5.500" cy="16" r="4.500" fill="#fff"/><circle cx="11" cy="11" r="5" fill="#fff"/><path d="M11 11Q7 6 11 1M11 11q3-4 11-1M11 11q6 2 5 10M11 11q0 6-4 10M11 11Q6 14 0 10" fill="none" stroke="#4b4e1a" stroke-width="1.300"/>`)}</button>
      </div>
      <div class="apps">
        ${apps.map((a) => html`<button class=${classMap({ app: true, active: !!a.active })} aria-label=${a.name}>${icon(24, 24, a.art)}${a.run ? html`<span class="run"><i></i>${a.run === "multi" ? html`<i></i>` : ""}</span>` : ""}</button>`)}
      </div>
      <div class="stretch"></div>
      <div class="two temp">87℃<br />CPU温度</div>
      <div class="tray">
        ${tray.map(([name, art]) => html`<button aria-label=${name}>${icon(16, 16, art)}</button>`)}
        <button class="ime">中</button>
      </div>
      <div class="two clock">22:57 周五<br />2021/1/8</div>
      <button class="news" aria-label="资讯">${icon(24, 22, svg`<path d="M0 1.500h2v14H0zM3 1h13v16H3z" fill="#fff"/><path d="M5 5h8M5 8h8M5 11h5" stroke="#4a4717" stroke-width="1.300"/><rect x="10" y="9" width="13" height="13" fill="#e81212"/><text x="14" y="19" font-size="10" fill="#fff">2</text>`)}</button>
      <button class="notes" aria-label="通知">${icon(17, 17, svg`<path d="M.5 1.500h15v11h-4l-3 3-3-3h-5z" fill="none" stroke="#fff" stroke-width="1.200"/>`)}</button>
      <button class="peek" aria-label="显示桌面"></button>
    </footer>`;
  }

  render() {
    return html`${this.renderHead()}${this.renderRibbon()}${this.renderWork()}${this.renderStatus()}${this.renderTaskbar()}`;
  }
}
